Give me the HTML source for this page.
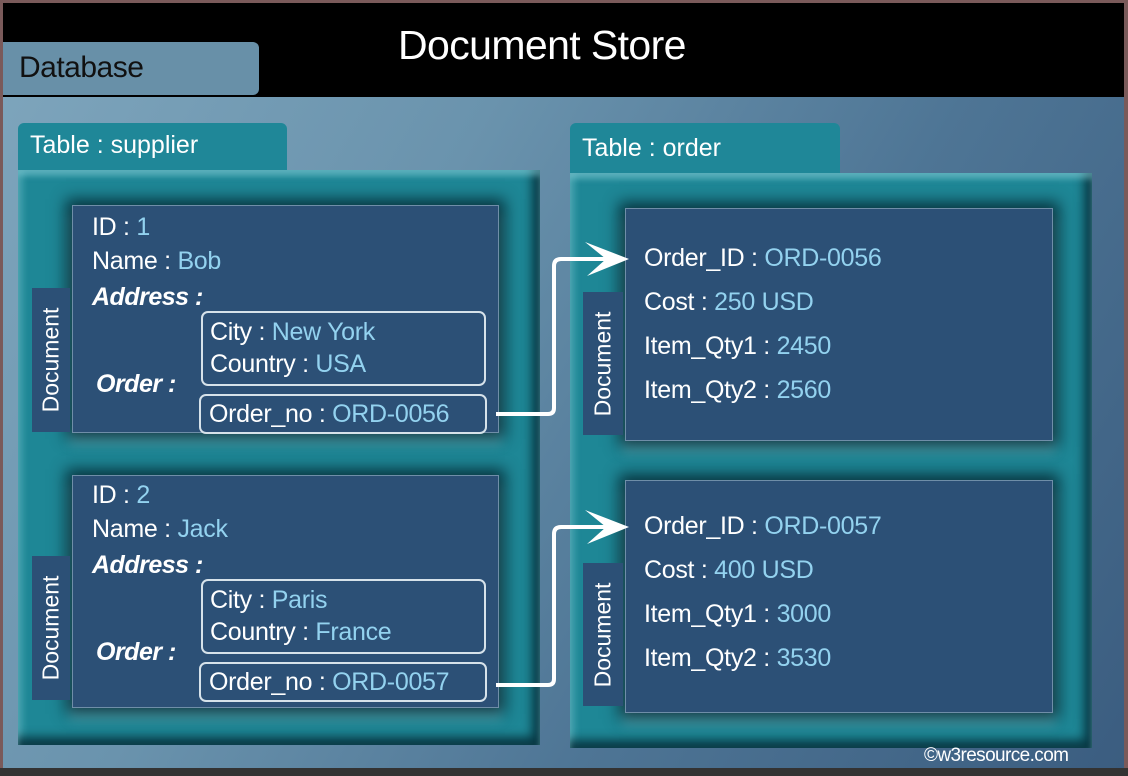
<!DOCTYPE html>
<html><head><style>
*{margin:0;padding:0;box-sizing:border-box}
body{width:1128px;height:776px;overflow:hidden;background:#333;font-family:"Liberation Sans",sans-serif;position:relative}
.frame{position:absolute;left:0;top:0;width:1128px;height:768px;background:#7a5a5a}
.bg{position:absolute;left:3px;top:3px;width:1121px;height:765px;background:linear-gradient(120deg,#7fa6bd 0%,#6a93ad 35%,#4e7595 65%,#3b5d80 100%)}
.hdr{position:absolute;left:3px;top:3px;width:1121px;height:94px;background:#000}
.title{position:absolute;left:398px;top:22px;color:#fff;font-size:41px;letter-spacing:-0.6px}
.db{position:absolute;left:3px;top:42px;width:256px;height:53px;background:#6890a8;border-radius:0 6px 6px 0;color:#111;font-size:30px;padding:9px 0 0 16px;letter-spacing:-0.5px}
.tab{position:absolute;background:#1f8798;border-radius:6px 6px 0 0;color:#fff;font-size:25px;padding:8px 0 0 12px}
.panel{position:absolute;background:#1e8796;box-shadow:inset 0 6px 6px rgba(140,210,220,.5),inset -8px -8px 10px rgba(0,30,40,.75),inset 6px 0 6px rgba(120,200,210,.3)}
.doc{position:absolute;background:#2c5076;border:1px solid #6f8ea8;box-shadow:0 0 14px 6px rgba(0,25,35,.75),0 10px 10px 2px rgba(160,220,230,.35)}
.lbl{position:absolute;background:#2c5076;width:38px}
.lbl span{position:absolute;left:50%;top:50%;transform:translate(-50%,-50%) rotate(-90deg);color:#fff;font-size:23px;white-space:nowrap}
.t{position:absolute;color:#fff;font-size:25px;line-height:26px;white-space:nowrap;letter-spacing:-0.3px}
.v{color:#93d2ef}
.i{font-style:italic;font-weight:bold;letter-spacing:-0.5px}
.box{position:absolute;border:2px solid #d6e2ea;border-radius:7px}
.copy{position:absolute;left:924px;top:745px;color:#fff;font-size:19px;letter-spacing:-0.6px}
</style></head><body>
<div class="frame"></div>
<div class="bg"></div>
<div class="hdr"></div>
<div class="title">Document Store</div>
<div class="db">Database</div>

<div class="tab" style="left:18px;top:123px;width:269px;height:48px">Table : supplier</div>
<div class="panel" style="left:18px;top:170px;width:522px;height:575px"></div>
<div class="tab" style="left:570px;top:123px;width:270px;height:51px;padding-top:11px">Table : order</div>
<div class="panel" style="left:570px;top:173px;width:522px;height:575px"></div>

<!-- left doc 1 -->
<div class="doc" style="left:72px;top:205px;width:427px;height:228px"></div>
<div class="lbl" style="left:32px;top:288px;height:144px"><span>Document</span></div>
<div class="box" style="left:201px;top:311px;width:285px;height:75px"></div>
<div class="box" style="left:199px;top:394px;width:288px;height:40px"></div>
<div class="t" style="left:92px;top:214px">ID : <span class="v">1</span></div>
<div class="t" style="left:92px;top:248px">Name : <span class="v">Bob</span></div>
<div class="t i" style="left:92px;top:284px">Address :</div>
<div class="t" style="left:210px;top:319px">City : <span class="v">New York</span></div>
<div class="t" style="left:210px;top:351px">Country : <span class="v">USA</span></div>
<div class="t i" style="left:96px;top:371px">Order :</div>
<div class="t" style="left:209px;top:401px">Order_no : <span class="v">ORD-0056</span></div>

<!-- left doc 2 -->
<div class="doc" style="left:72px;top:475px;width:427px;height:233px"></div>
<div class="lbl" style="left:32px;top:556px;height:144px"><span>Document</span></div>
<div class="box" style="left:201px;top:579px;width:285px;height:75px"></div>
<div class="box" style="left:199px;top:662px;width:288px;height:40px"></div>
<div class="t" style="left:92px;top:482px">ID : <span class="v">2</span></div>
<div class="t" style="left:92px;top:516px">Name : <span class="v">Jack</span></div>
<div class="t i" style="left:92px;top:552px">Address :</div>
<div class="t" style="left:210px;top:587px">City : <span class="v">Paris</span></div>
<div class="t" style="left:210px;top:619px">Country : <span class="v">France</span></div>
<div class="t i" style="left:96px;top:639px">Order :</div>
<div class="t" style="left:209px;top:669px">Order_no : <span class="v">ORD-0057</span></div>

<!-- right doc 1 -->
<div class="doc" style="left:625px;top:208px;width:428px;height:233px"></div>
<div class="lbl" style="left:583px;top:292px;height:143px;width:40px"><span>Document</span></div>
<div class="t" style="left:644px;top:245px">Order_ID : <span class="v">ORD-0056</span></div>
<div class="t" style="left:644px;top:289px">Cost : <span class="v">250 USD</span></div>
<div class="t" style="left:644px;top:333px">Item_Qty1 : <span class="v">2450</span></div>
<div class="t" style="left:644px;top:377px">Item_Qty2 : <span class="v">2560</span></div>

<!-- right doc 2 -->
<div class="doc" style="left:625px;top:480px;width:428px;height:233px"></div>
<div class="lbl" style="left:583px;top:563px;height:143px;width:40px"><span>Document</span></div>
<div class="t" style="left:644px;top:513px">Order_ID : <span class="v">ORD-0057</span></div>
<div class="t" style="left:644px;top:557px">Cost : <span class="v">400 USD</span></div>
<div class="t" style="left:644px;top:601px">Item_Qty1 : <span class="v">3000</span></div>
<div class="t" style="left:644px;top:645px">Item_Qty2 : <span class="v">3530</span></div>

<svg style="position:absolute;left:0;top:0" width="1128" height="776">
<g fill="none" stroke="#fff" stroke-width="4" stroke-linejoin="round">
<path d="M496 414 H548 Q554 414 554 408 V266 Q554 259 561 259 H615"/>
<path d="M496 685 H548 Q554 685 554 679 V534 Q554 527 561 527 H615"/>
</g>
<g fill="#fff">
<path d="M585 242 L629 259 L587 276 L606 259 Z"/>
<path d="M585 510 L629 527 L587 544 L606 527 Z"/>
</g>
</svg>
<div class="copy">©w3resource.com</div>
</body></html>
